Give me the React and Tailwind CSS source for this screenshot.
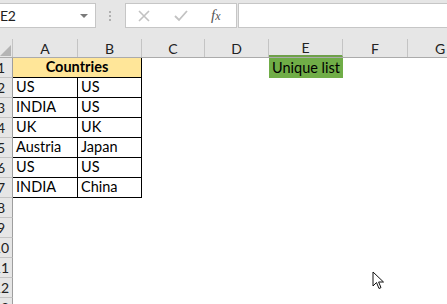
import React from 'react';

const cols = [
  { key: 'A', w: 'w-[65px]' },
  { key: 'B', w: 'w-[64px]' },
  { key: 'C', w: 'w-[63px]' },
  { key: 'D', w: 'w-[64px]' },
  { key: 'E', w: 'w-[74px]' },
  { key: 'F', w: 'w-[65px]' },
  { key: 'G', w: 'w-[65px]' },
];

const data = [
  ['US', 'US'],
  ['INDIA', 'US'],
  ['UK', 'UK'],
  ['Austria', 'Japan'],
  ['US', 'US'],
  ['INDIA', 'China'],
];

// row numbers are scrolled half out of view, like the sheet
function RowHead({ n }) {
  return (
    <div className="relative w-[13px] h-[20px] shrink-0 overflow-hidden bg-[#e6e6e6] border-r border-b border-r-[#9e9e9e] border-b-[#c4c4c4]">
      <div className="absolute left-[-12px] top-0 w-[26px] h-[19px] flex items-center justify-center text-[14px] text-[#222]">
        {n}
      </div>
    </div>
  );
}

function Cell({ children, w, className = '' }) {
  return (
    <div className={`${w} h-[20px] shrink-0 flex items-end pb-[1px] pl-[3px] text-[14.5px] leading-[18px] text-black ${className}`}>
      {children}
    </div>
  );
}

function Toolbar() {
  return (
    <div className="h-[39px] bg-[#e6e6e6] flex items-start pt-[3px]">
      <div className="ml-[-2px] w-[98px] h-[25px] bg-white border border-[#c6c6c6] flex items-center justify-between pl-[1px] pr-[7px] shrink-0">
        <span className="text-[14px] text-[#222] tracking-[-0.3px]">E2</span>
        <div className="w-0 h-0 border-l-[4px] border-r-[4px] border-t-[4px] border-l-transparent border-r-transparent border-t-[#7a7a7a]" />
      </div>
      <div className="ml-[13px] mt-[8px] flex flex-col gap-[2px] shrink-0">
        <div className="w-[2px] h-[2px] bg-[#b0b0b0]" />
        <div className="w-[2px] h-[2px] bg-[#b0b0b0]" />
        <div className="w-[2px] h-[2px] bg-[#b0b0b0]" />
      </div>
      <div className="ml-[14px] w-[112px] h-[25px] bg-white border border-[#c6c6c6] flex items-center shrink-0">
        <svg width="12" height="12" viewBox="0 0 12 12" className="ml-[12px]">
          <path d="M1 1 L11 11 M11 1 L1 11" stroke="#c2c2c2" strokeWidth="1.6" />
        </svg>
        <svg width="14" height="12" viewBox="0 0 14 12" className="ml-[24px]">
          <path d="M1 6 L5 10 L13 1" stroke="#c2c2c2" strokeWidth="1.8" fill="none" />
        </svg>
        <span className="ml-[23px] text-[15px] italic text-[#555] font-['Liberation_Serif',serif] leading-none">
          f<span className="text-[12px]">x</span>
        </span>
      </div>
      <div className="ml-[1px] flex-1 h-[25px] bg-white border-l border-t border-b border-[#c6c6c6]" />
    </div>
  );
}

function HeaderRow() {
  return (
    <div className="flex h-[19px] bg-[#e6e6e6] border-b border-[#ababab]">
      <div className="relative w-[13px] h-[18px] shrink-0 border-r border-[#c4c4c4]">
        <svg width="11" height="11" viewBox="0 0 11 11" className="absolute right-[1px] bottom-[1px]">
          <path d="M11 0 L11 11 L0 11 Z" fill="#b4b4b4" />
        </svg>
      </div>
      {cols.map(c => (
        <div
          key={c.key}
          className={`${c.w} h-[18px] shrink-0 flex items-center justify-center text-[14px] text-[#222] border-r border-[#c4c4c4] ${
            c.key === 'E' ? 'border-b-2 border-b-[#6fa04a]' : ''
          }`}
        >
          {c.key}
        </div>
      ))}
    </div>
  );
}

export default function App() {
  return (
    <div className="relative w-[447px] h-[304px] overflow-hidden bg-white font-['Lato','Carlito','Noto_Sans',sans-serif]">
      <Toolbar />
      <HeaderRow />

      <div className="flex">
        <RowHead n={1} />
        <div className="w-[129px] h-[20px] shrink-0 flex items-end justify-center pb-[1px] bg-[#ffe699] border-r border-b border-black text-[14.5px] leading-[18px] font-bold text-black">
          Countries
        </div>
        <Cell w="w-[63px]" />
        <Cell w="w-[64px]" />
        <Cell w="w-[74px]" className="bg-[#70ad47] text-[#111]">Unique list</Cell>
      </div>

      {data.map((r, i) => (
        <div key={`row-${i + 2}`} className="flex">
          <RowHead n={i + 2} />
          <Cell w="w-[65px]" className="border-r border-b border-black">{r[0]}</Cell>
          <Cell w="w-[64px]" className="border-r border-b border-black">{r[1]}</Cell>
        </div>
      ))}

      {[8, 9, 10, 11, 12, 13].map(n => (
        <div key={`row-${n}`} className="flex">
          <RowHead n={n} />
        </div>
      ))}

      {/* mouse pointer */}
      <svg width="14" height="20" viewBox="0 0 14 20" className="absolute left-[372px] top-[271px]">
        <path d="M1 1 L1 15 L4.5 11.5 L7 17.5 L9 16.6 L6.6 11 L11.5 11 Z" fill="#fff" stroke="#111" strokeWidth="1" strokeLinejoin="round" />
      </svg>
    </div>
  );
}
